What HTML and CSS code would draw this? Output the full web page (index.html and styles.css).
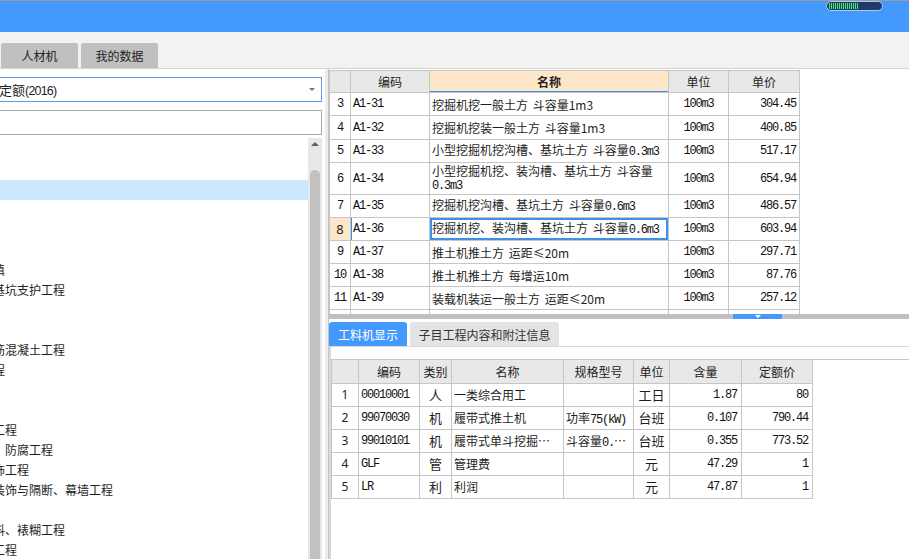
FILE: index.html
```html
<!DOCTYPE html>
<html lang="zh-CN">
<head>
<meta charset="utf-8">
<title>定额库</title>
<link rel="stylesheet" href="styles.css">
</head>
<body>
<div class="app">
  <header class="titlebar">
    <div class="battery"><span class="bars"></span></div>
  </header>
  <nav class="tabbar">
    <div class="tab">人材机</div>
    <div class="tab">我的数据</div>
  </nav>
  <main class="main">
    <aside class="left">
      <div class="combo"><span class="combo-text">定额<span class="combo-num">(2016)</span></span><span class="combo-arrow"></span></div>
      <div class="search"></div>
      <div class="tree">
        <ul class="tree-list">
          <li></li>
          <li></li>
          <li class="sel"></li>
          <li></li>
          <li></li>
          <li></li>
          <li>场地平整回填</li>
          <li>地基处理及基坑支护工程</li>
          <li></li>
          <li></li>
          <li>混凝土及钢筋混凝土工程</li>
          <li>金属结构工程</li>
          <li></li>
          <li></li>
          <li>屋面及防水工程</li>
          <li>保温、隔热、防腐工程</li>
          <li>楼地面及装饰工程</li>
          <li>墙面、柱面装饰与隔断、幕墙工程</li>
          <li></li>
          <li>油漆、刷涂料、裱糊工程</li>
          <li>拆除与其他工程</li>
        </ul>
        <div class="vscroll"><span class="up"></span><span class="thumb"></span></div>
      </div>
    </aside>
    <div class="vsplit"></div>
    <section class="right">
      <div class="topgrid">
        <table class="grid qgrid">
          <colgroup><col class="c-no"><col class="c-code"><col class="c-name"><col class="c-unit"><col class="c-price"></colgroup>
          <thead>
            <tr><th></th><th>编码</th><th class="hl">名称</th><th>单位</th><th>单价</th></tr>
          </thead>
          <tbody>
            <tr><td class="no m">3</td><td class="m code">A1-31</td><td class="name">挖掘机挖一般土方 斗容量1m3</td><td class="m ctr">100m3</td><td class="m num">304.45</td></tr>
            <tr class="r24"><td class="no m">4</td><td class="m code">A1-32</td><td class="name">挖掘机挖装一般土方 斗容量1m3</td><td class="m ctr">100m3</td><td class="m num">400.85</td></tr>
            <tr><td class="no m">5</td><td class="m code">A1-33</td><td class="name">小型挖掘机挖沟槽、基坑土方 斗容量<span class="m">0.3m3</span></td><td class="m ctr">100m3</td><td class="m num">517.17</td></tr>
            <tr class="tall"><td class="no m">6</td><td class="m code">A1-34</td><td class="name">小型挖掘机挖、装沟槽、基坑土方 斗容量<span class="m">0.3m3</span></td><td class="m ctr">100m3</td><td class="m num">654.94</td></tr>
            <tr><td class="no m">7</td><td class="m code">A1-35</td><td class="name">挖掘机挖沟槽、基坑土方 斗容量<span class="m">0.6m3</span></td><td class="m ctr">100m3</td><td class="m num">486.57</td></tr>
            <tr class="cur"><td class="no cur-no">8</td><td class="m code cur-code">A1-36</td><td class="name cur-cell">挖掘机挖、装沟槽、基坑土方 斗容量<span class="m">0.6m3</span></td><td class="m ctr">100m3</td><td class="m num">603.94</td></tr>
            <tr><td class="no m">9</td><td class="m code">A1-37</td><td class="name">推土机推土方 运距≤20m</td><td class="m ctr">100m3</td><td class="m num">297.71</td></tr>
            <tr><td class="no m">10</td><td class="m code">A1-38</td><td class="name">推土机推土方 每增运10m</td><td class="m ctr">100m3</td><td class="m num">87.76</td></tr>
            <tr><td class="no m">11</td><td class="m code">A1-39</td><td class="name">装载机装运一般土方 运距≤20m</td><td class="m ctr">100m3</td><td class="m num">257.12</td></tr>
            <tr><td></td><td></td><td></td><td></td><td></td></tr>
          </tbody>
        </table>
      </div>
      <div class="hsplit"><span class="handle"><span class="tri"></span></span></div>
      <div class="bottom">
        <div class="btabs">
          <div class="btab active">工料机显示</div>
          <div class="btab">子目工程内容和附注信息</div>
        </div>
        <div class="bgap"></div>
        <div class="bgrid">
          <table class="grid rgrid">
            <colgroup><col class="d-no"><col class="d-code"><col class="d-cat"><col class="d-name"><col class="d-spec"><col class="d-unit"><col class="d-qty"><col class="d-price"></colgroup>
            <thead>
              <tr><th></th><th>编码</th><th>类别</th><th>名称</th><th>规格型号</th><th>单位</th><th>含量</th><th>定额价</th></tr>
            </thead>
            <tbody>
              <tr><td class="no s">1</td><td class="m code">00010001</td><td class="ctr">人</td><td class="name">一类综合用工</td><td class="name"></td><td class="ctr">工日</td><td class="m num">1.87</td><td class="m num">80</td></tr>
              <tr><td class="no s">2</td><td class="m code">99070030</td><td class="ctr">机</td><td class="name">履带式推土机</td><td class="name">功率<span class="m">75(kW)</span></td><td class="ctr">台班</td><td class="m num">0.107</td><td class="m num">790.44</td></tr>
              <tr><td class="no s">3</td><td class="m code">99010101</td><td class="ctr">机</td><td class="name">履带式单斗挖掘…</td><td class="name">斗容量<span class="m">0.</span>…</td><td class="ctr">台班</td><td class="m num">0.355</td><td class="m num">773.52</td></tr>
              <tr><td class="no s">4</td><td class="m code">GLF</td><td class="ctr">管</td><td class="name">管理费</td><td class="name"></td><td class="ctr">元</td><td class="m num">47.29</td><td class="m num">1</td></tr>
              <tr><td class="no s">5</td><td class="m code">LR</td><td class="ctr">利</td><td class="name">利润</td><td class="name"></td><td class="ctr">元</td><td class="m num">47.87</td><td class="m num">1</td></tr>
            </tbody>
          </table>
        </div>
      </div>
    </section>
  </main>
</div>
</body>
</html>
```

FILE: styles.css
```css
* { box-sizing: border-box; margin: 0; padding: 0; }
html, body { width: 909px; height: 559px; overflow: hidden; background: #fff; }
body { font-family: "Noto Sans CJK SC", "Noto Sans", sans-serif; font-size: 12px; color: #1e1e1e; }

.app { display: flex; flex-direction: column; height: 559px; }

/* title bar */
.titlebar { height: 32px; flex: none; border-top: 1px solid #9c9c9c; background: #4499fd; display: flex; justify-content: flex-end; padding-right: 26px; }
.battery { width: 57px; height: 10px; border: 1px solid #a4cbf2; border-radius: 5px; background: #1d3a68; display: flex; align-items: center; padding-left: 2px; }
.bars { width: 29px; height: 6px; background: repeating-linear-gradient(90deg, #4cf063 0 1px, #1d3a68 1px 2px); }

/* tabs */
.tabbar { height: 37px; flex: none; background: #f2f2f2; border-bottom: 1px solid #d3d3d3; display: flex; align-items: flex-end; gap: 3px; padding-left: 1px; }
.tab { width: 77px; height: 25px; background: #c0c0c0; border-radius: 2px 2px 0 0; display: flex; align-items: center; justify-content: center; font-size: 12px; color: #222; }

.main { flex: 1; display: flex; min-height: 0; }

/* left pane */
.left { width: 325px; flex: none; display: flex; flex-direction: column; padding-right: 3px; overflow: hidden; }
.combo { margin: 8px 0 0 -2px; height: 25px; flex: none; border: 1px solid #5b9de8; display: flex; align-items: center; justify-content: space-between; padding-right: 6px; }
.combo-text { font-size: 13px; color: #1e1e1e; white-space: nowrap; }
.combo-num { font-family: "Liberation Sans", sans-serif; font-size: 12.5px; letter-spacing: -0.8px; }
.combo-arrow { width: 0; height: 0; border-left: 3px solid transparent; border-right: 3px solid transparent; border-top: 3px solid #777; }
.search { margin-top: 8px; height: 25px; flex: none; border: 1px solid #a9a9a9; border-left: none; }
.tree { margin-top: 3px; flex: 1; display: flex; min-height: 0; }
.tree-list { list-style: none; flex: 1; overflow: hidden; padding-top: 2px; }
.tree-list li { height: 20px; line-height: 20px; white-space: nowrap; text-indent: -67px; font-size: 12px; color: #1e1e1e; overflow: hidden; }
.tree-list li.sel { background: #cce8ff; }
.vscroll { width: 14px; flex: none; background: #e8e8e8; display: flex; flex-direction: column; align-items: center; padding-top: 4px; }
.up { width: 0; height: 0; border-left: 4px solid transparent; border-right: 4px solid transparent; border-bottom: 4px solid #606060; flex: none; }
.thumb { width: 10px; flex: 1; margin-top: 24px; background: #c1c1c1; border-radius: 5px 5px 0 0; }

.vsplit { width: 4px; flex: none; background: #ececec; border-right: 1px solid #c3c3c3; }

/* right pane */
.right { flex: 1; display: flex; flex-direction: column; min-width: 0; }
.topgrid { height: 245px; flex: none; overflow: hidden; padding-top: 1px; }

.grid { border-collapse: collapse; table-layout: fixed; }
.grid th, .grid td { border: 1px solid #c6c6c6; font-weight: normal; white-space: nowrap; overflow: hidden; vertical-align: middle; }
.grid th { background: #e8e8e8; text-align: center; font-size: 12px; color: #222; }

.qgrid { width: 470px; }
.c-no { width: 21px; } .c-code { width: 79px; } .c-name { width: 239px; } .c-unit { width: 60px; } .c-price { width: 71px; }
.qgrid thead tr { height: 22px; }
.qgrid tbody tr { height: 23px; }
.qgrid tbody tr.r24 { height: 24px; }
.qgrid tbody tr.tall { height: 32px; }
.qgrid th.hl { background: #fee7c9; font-weight: bold; box-shadow: inset 0 -1px 0 #3d8fe8; }
.qgrid td.name { white-space: normal; line-height: 13px; word-spacing: 2px; }

.m { font-family: "Liberation Mono", monospace; font-size: 12px; letter-spacing: -1.2px; word-spacing: 0; color: #111; }
.s { font-family: "Noto Sans", sans-serif; font-size: 12px; }
.no { text-align: center; }
.code { padding-left: 2px; }
.name { padding: 0 2px; font-size: 12px; }
.ctr { text-align: center; }
.num { text-align: right; padding-right: 3px; }

.cur-no { background: #fee7c9; font-family: "Noto Sans", sans-serif; font-weight: bold; font-size: 13px; }
.cur-code { box-shadow: inset 1px 0 0 #3d8fe8; }
.cur-cell { box-shadow: inset 0 0 0 2px #3d8fe8; }

.hsplit { height: 5px; flex: none; background: #c0c0c0; display: flex; padding-left: 404px; }
.handle { width: 49px; background: #4499fd; display: flex; justify-content: center; align-items: center; }
.tri { width: 0; height: 0; border-left: 3px solid transparent; border-right: 3px solid transparent; border-top: 3px solid #fff; }

.bottom { flex: 1; display: flex; flex-direction: column; min-height: 0; }
.btabs { margin-top: 3px; height: 25px; flex: none; display: flex; gap: 3px; border-bottom: 1px solid #d8d8d8; }
.btab { height: 24px; display: flex; align-items: center; justify-content: center; font-size: 12px; color: #333; background: #e4e4e4; border-radius: 3px 3px 0 0; width: 149px; }
.btab.active { width: 78px; background: #4499fd; color: #fff; }
.bgap { height: 12px; flex: none; border-left: 2px solid #d9d9d9; }
.bgrid { flex: 1; border-left: 2px solid #d9d9d9; border-top: 1px solid #c6c6c6; overflow: hidden; }

.rgrid { width: 481px; }
.rgrid th { border-top: 0; }
.d-no { width: 27px; } .d-code { width: 61px; } .d-cat { width: 32px; } .d-name { width: 112px; } .d-spec { width: 70px; } .d-unit { width: 36px; } .d-qty { width: 72px; } .d-price { width: 71px; }
.rgrid thead tr { height: 23px; }
.rgrid tbody tr { height: 23px; }
.rgrid td.num { padding-right: 4px; }
.rgrid td.ctr { font-size: 13px; }
```
